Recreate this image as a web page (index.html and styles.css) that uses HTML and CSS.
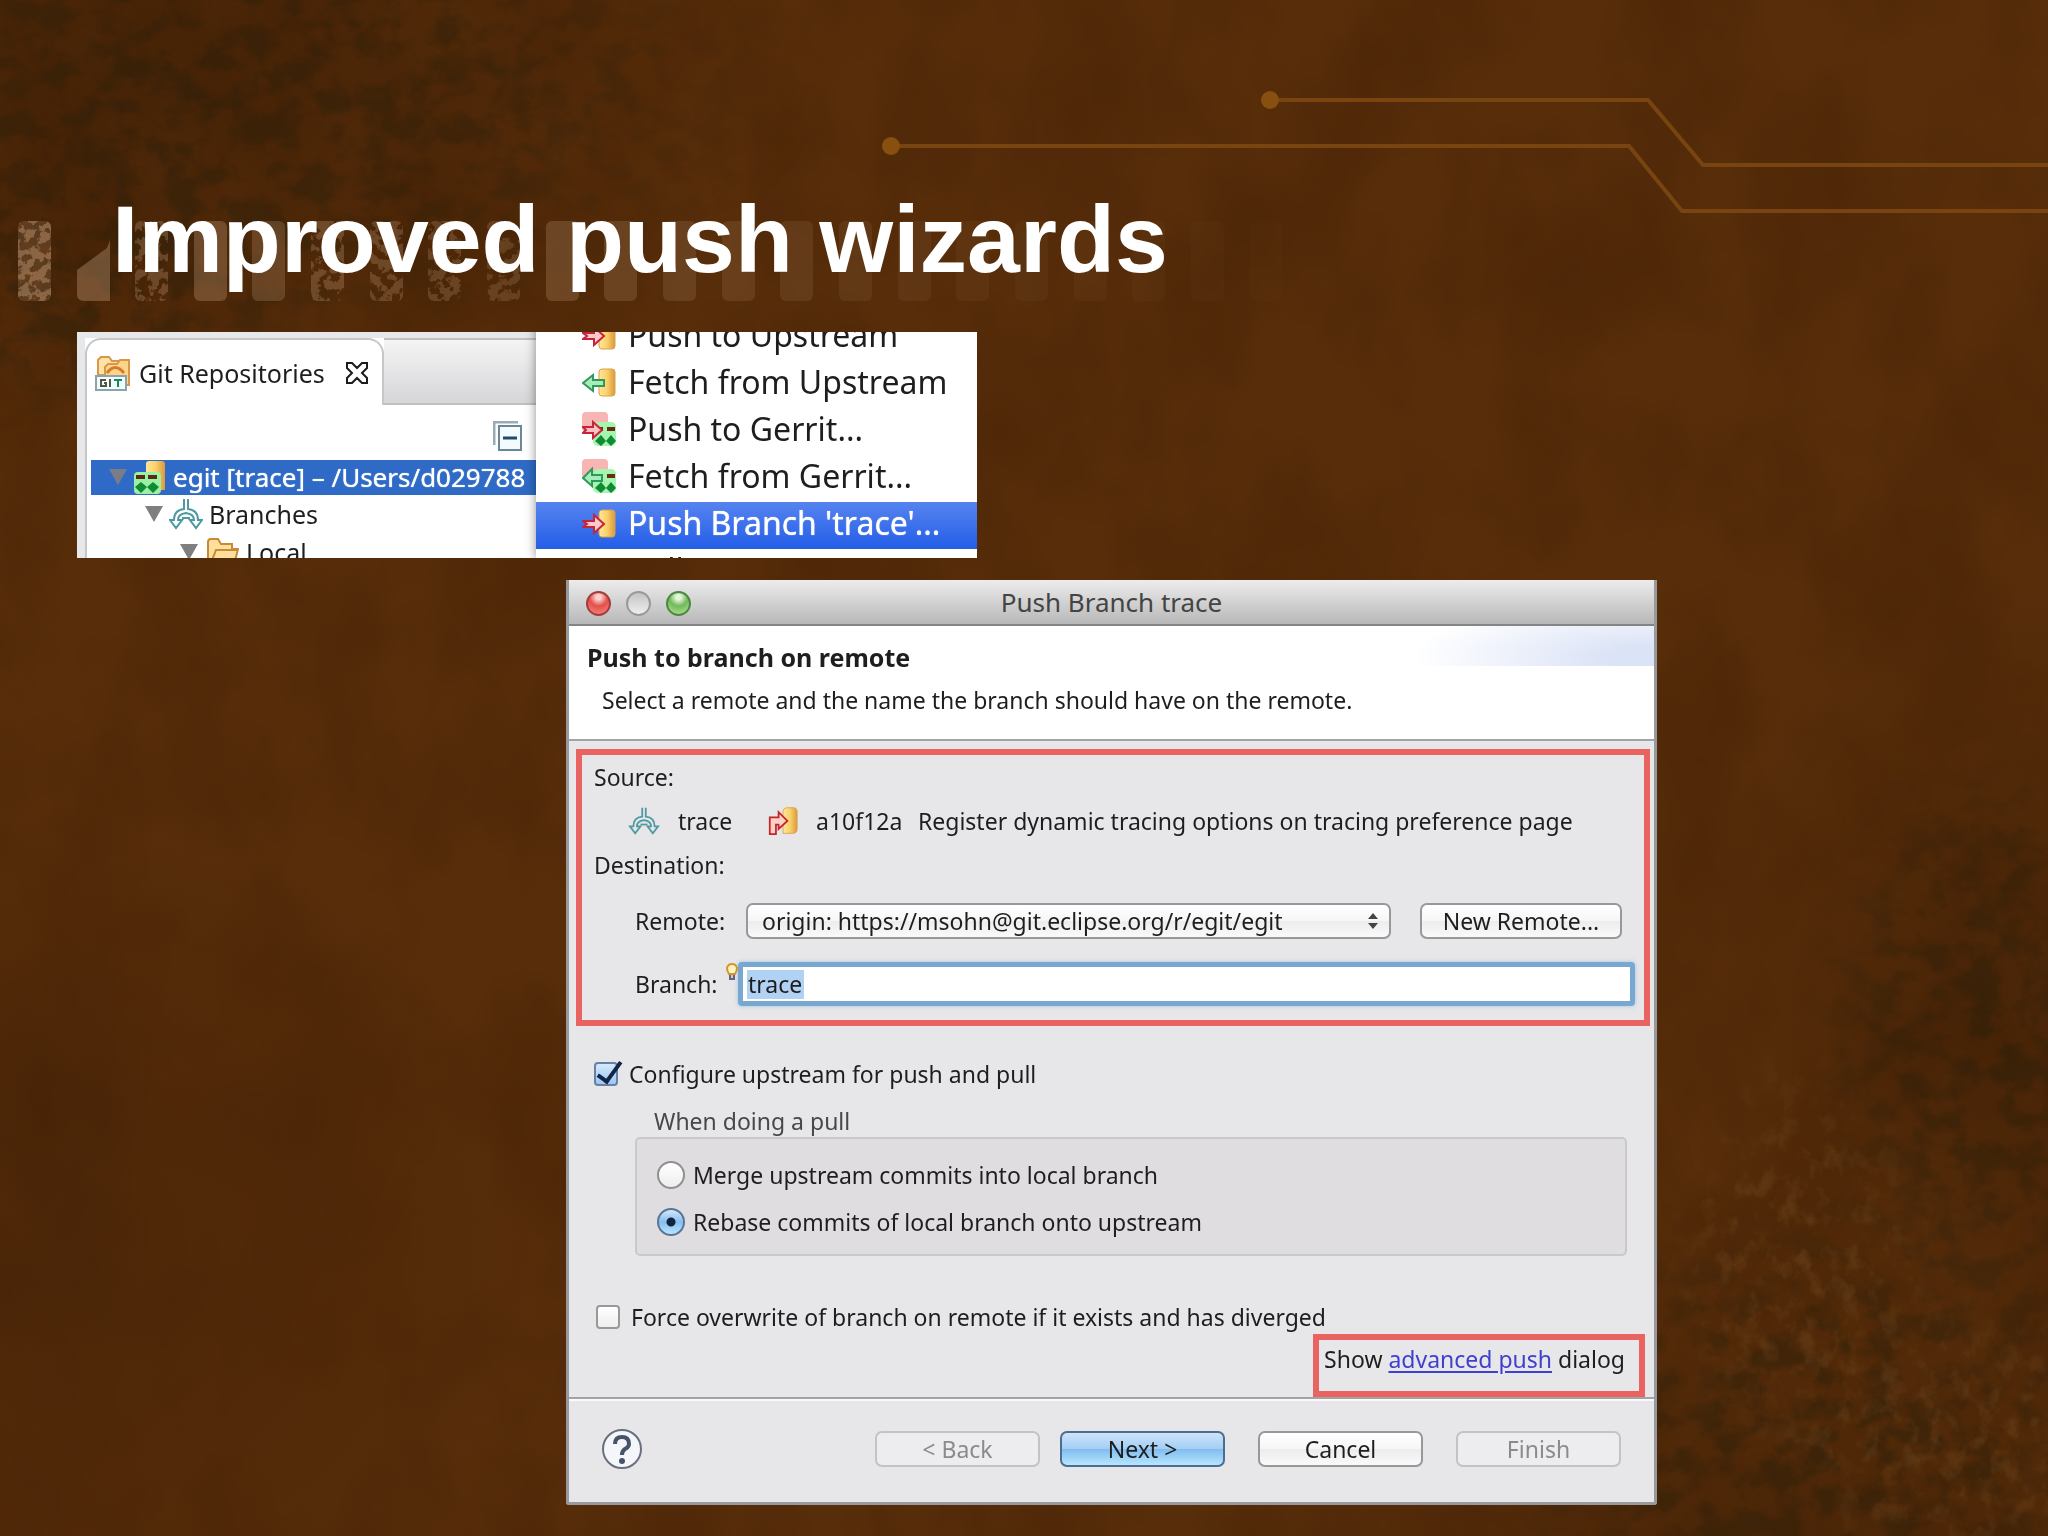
FILE: index.html
```html
<!DOCTYPE html>
<html lang="en">
<head>
<meta charset="utf-8">
<title>Improved push wizards</title>
<meta name="viewport" content="width=device-width, initial-scale=1">
<link rel="stylesheet" href="styles.css">
</head>
<body>
<svg class="backdrop" viewBox="0 0 2048 1536" preserveAspectRatio="xMidYMid slice" aria-hidden="true">
  <defs>
    <filter id="grunge" x="0" y="0" width="100%" height="100%" color-interpolation-filters="sRGB">
      <feTurbulence type="fractalNoise" baseFrequency="0.03 0.035" numOctaves="6" seed="8"/>
      <feColorMatrix values="0 0 0 0 0.16  0 0 0 0 0.12  0 0 0 0 0.04  4 0 0 0 -1.7"/>
    </filter>
    <filter id="grain" x="0" y="0" width="100%" height="100%" color-interpolation-filters="sRGB">
      <feTurbulence type="fractalNoise" baseFrequency="0.008 0.006" numOctaves="4" seed="3"/>
      <feColorMatrix values="0 0 0 0 0.22  0 0 0 0 0.1  0 0 0 0 0.01  1.6 0 0 0 -0.6"/>
    </filter>
    <filter id="dust" x="0" y="0" width="100%" height="100%" color-interpolation-filters="sRGB">
      <feTurbulence type="fractalNoise" baseFrequency="0.05 0.04" numOctaves="5" seed="21"/>
      <feColorMatrix values="0 0 0 0 0.5  0 0 0 0 0.33  0 0 0 0 0.16  4 0 0 0 -2"/>
    </filter>
    <filter id="worn" x="0" y="0" width="100%" height="100%">
      <feTurbulence type="fractalNoise" baseFrequency="0.1" numOctaves="4" seed="5" result="n"/>
      <feColorMatrix in="n" values="0 0 0 0 1  0 0 0 0 1  0 0 0 0 1  14 0 0 0 -6.4" result="m"/>
      <feComposite in="SourceGraphic" in2="m" operator="in"/>
    </filter>
    <radialGradient id="g"><stop offset="0" stop-color="#fff"/><stop offset=".5" stop-color="#fff" stop-opacity=".7"/><stop offset="1" stop-color="#fff" stop-opacity="0"/></radialGradient>
    <mask id="darkAreas">
      <ellipse cx="200" cy="90" rx="620" ry="270" fill="url(#g)"/>
      <ellipse cx="40" cy="280" rx="320" ry="150" fill="url(#g)"/>
      <ellipse cx="1990" cy="1040" rx="200" ry="330" fill="url(#g)"/>
      <ellipse cx="1830" cy="1440" rx="380" ry="260" fill="url(#g)"/>
    </mask>
    <mask id="dustAreas">
      <ellipse cx="1800" cy="1260" rx="150" ry="230" fill="url(#g)"/>
      <ellipse cx="1960" cy="1440" rx="200" ry="160" fill="url(#g)"/>
    </mask>
    <radialGradient id="shade"><stop offset="0" stop-color="#331803" stop-opacity=".75"/><stop offset="1" stop-color="#331803" stop-opacity="0"/></radialGradient>
  </defs>
  <rect width="2048" height="1536" fill="#572d0a"/>
  <ellipse cx="120" cy="80" rx="640" ry="330" fill="url(#shade)" opacity=".6"/>
  <ellipse cx="0" cy="1250" rx="560" ry="460" fill="url(#shade)" opacity=".4"/>
  <ellipse cx="2048" cy="1000" rx="360" ry="420" fill="url(#shade)" opacity=".5"/>
  <ellipse cx="1800" cy="1536" rx="520" ry="300" fill="url(#shade)" opacity=".4"/>
  <rect width="2048" height="1536" filter="url(#grain)" opacity=".35"/>
  <rect width="2048" height="1536" filter="url(#grunge)" mask="url(#darkAreas)" opacity=".5"/>
  <rect width="2048" height="1536" filter="url(#dust)" mask="url(#dustAreas)" opacity=".35"/>
  <g fill="#c09a78">
    <g filter="url(#worn)">
      <rect x="18" y="221" width="33" height="80" rx="6" opacity=".45"/>
      <rect x="135" y="221" width="33" height="80" rx="6" opacity=".3"/>
      <rect x="311" y="221" width="33" height="80" rx="6" opacity=".3"/>
      <rect x="370" y="221" width="33" height="80" rx="6" opacity=".28"/>
      <rect x="428" y="221" width="33" height="80" rx="6" opacity=".25"/>
      <rect x="487" y="221" width="33" height="80" rx="6" opacity=".22"/>
    </g>
    <rect x="18" y="221" width="33" height="80" rx="6" opacity=".2"/>
    <path d="M77 270L107 248L110 240V301H84Q77 301 77 294Z" opacity=".38"/>
    <rect x="194" y="221" width="33" height="80" rx="6" opacity=".32"/>
    <rect x="252" y="221" width="33" height="80" rx="6" opacity=".26"/>
    <rect x="546" y="221" width="33" height="80" rx="6" opacity=".26"/>
    <rect x="604" y="221" width="33" height="80" rx="6" opacity=".22"/>
    <rect x="663" y="221" width="33" height="80" rx="6" opacity=".19"/>
    <rect x="722" y="221" width="33" height="80" rx="6" opacity=".16"/>
    <rect x="780" y="221" width="33" height="80" rx="6" opacity=".14"/>
    <rect x="839" y="221" width="33" height="80" rx="6" opacity=".11"/>
    <rect x="898" y="221" width="33" height="80" rx="6" opacity=".09"/>
    <rect x="956" y="221" width="33" height="80" rx="6" opacity=".07"/>
    <rect x="1015" y="221" width="33" height="80" rx="6" opacity=".06"/>
    <rect x="1074" y="221" width="33" height="80" rx="6" opacity=".05"/>
    <rect x="1132" y="221" width="33" height="80" rx="6" opacity=".04"/>
    <rect x="1191" y="221" width="33" height="80" rx="6" opacity=".03"/>
    <rect x="1250" y="221" width="33" height="80" rx="6" opacity=".02"/>
  </g>
  <g fill="none" stroke="#78440f" stroke-width="4">
    <path d="M1270 100H1648L1703 165H2048"/>
    <path d="M891 146H1629L1682 211H2048"/>
  </g>
  <circle cx="1270" cy="100" r="9" fill="#87500f"/>
  <circle cx="891" cy="146" r="9" fill="#87500f"/>
</svg>

<svg class="symbols" aria-hidden="true">
  <defs>
    <linearGradient id="gold" x1="0" x2="1"><stop offset="0" stop-color="#ffe79a"/><stop offset=".5" stop-color="#fbd06a"/><stop offset="1" stop-color="#d99a3c"/></linearGradient>
    <symbol id="db" viewBox="0 0 34 34"><path d="M17 7Q17 4 20 4H30Q33 4 33 7V28Q33 31 30 31H20Q17 31 17 28Z" fill="url(#gold)" stroke="#d9a04a"/></symbol>
    <symbol id="push" viewBox="0 0 34 34"><use href="#db"/><path d="M1 15H12V9L22 18L12 27V21H1L5 18Z" fill="#ffc9c9" stroke="#c4243c" stroke-width="2"/></symbol>
    <symbol id="fetch" viewBox="0 0 34 34"><use href="#db"/><path d="M22 15H11V10L1 18L11 26V21H22Z" fill="#a5ecb8" stroke="#2d9a5b" stroke-width="2"/></symbol>
    <symbol id="gerrit" viewBox="0 0 34 34"><rect width="26" height="20" rx="4" fill="#f9b4b4"/><rect x="11" y="10" width="23" height="24" rx="5" fill="#a4f5ae"/><path d="M15 17H21M25 17H33" stroke="#6b2a14" stroke-width="4"/><path d="M13 29L19 23L24 29L19 34ZM24 29L29 23L34 29L29 34Z" fill="#108a35"/></symbol>
    <symbol id="pushGerrit" viewBox="0 0 34 34"><use href="#gerrit"/><path d="M1 15H11V10L20 18L11 26V21H1L4 18Z" fill="#ffc0c0" stroke="#c4243c" stroke-width="2"/></symbol>
    <symbol id="fetchGerrit" viewBox="0 0 34 34"><use href="#gerrit"/><path d="M20 16H10V10L1 19L10 27V22H20Z" fill="#a5ecb8" stroke="#2d9a5b" stroke-width="2"/></symbol>
    <symbol id="branch" viewBox="0 0 34 34"><g fill="none" stroke="#4e99a2" stroke-width="2"><path d="M15 2V12Q5 13 5 23H1L7 31L13 23H9Q9 17 17 16Q25 17 25 23H21L27 31L33 23H29Q29 13 19 12V2"/><path d="M13 21H21"/></g></symbol>
    <symbol id="folder" viewBox="0 0 34 34"><path d="M3 28V7Q3 4 6 4H13L16 9H27V14H33L29 30H5Z" fill="#ffdf9c" stroke="#c98a38" stroke-width="2"/><path d="M6 28L11 15H33" fill="none" stroke="#c98a38" stroke-width="2"/></symbol>
  </defs>
</svg>

<main class="slide">
  <h1 class="slide-title">Improved push wizards</h1>

  <section class="repo-shot" aria-label="Git Repositories context menu">
    <div class="repo-view">
      <div class="tab-bar">
        <div class="tab">
          <svg class="tab-icon" viewBox="0 0 36 36"><path d="M3 20V5L6 2H14L17 6H27V20Z" fill="#ffe2a8" stroke="#d99748" stroke-width="2"/><path d="M10 25V12L13 9H22L25 5H34V30H10Z" fill="#ffd489" stroke="#d99748" stroke-width="2"/><path d="M12 18Q20 7 29 18" fill="none" stroke="#d07e2c" stroke-width="3"/><rect x="1" y="21" width="30" height="14" fill="#f2ffff" stroke="#8aa3ad" stroke-width="2"/><g fill="none" stroke-width="2"><path d="M11 25H6V31H11V28H9M15 24V32" stroke="#554"/><path d="M19 25H27M23 25V32" stroke="#138a62"/></g></svg>
          <span>Git Repositories</span>
          <svg class="tab-close" viewBox="0 0 24 24"><path d="M2 2H7L12 7L17 2H22V7L17 12L22 17V22H17L12 17L7 22H2V17L7 12L2 7Z" fill="#fff" stroke="#1c1c1c" stroke-width="2"/></svg>
        </div>
        <div class="tab-rest"></div>
      </div>
      <div class="tree-tools">
        <svg class="collapse" viewBox="0 0 30 30"><path d="M1 24V1H25" fill="none" stroke="#9aabb5" stroke-width="3"/><rect x="6" y="5" width="22" height="24" fill="#f4fbff" stroke="#6b8797" stroke-width="2"/><path d="M10 17H24" stroke="#234a6a" stroke-width="3"/></svg>
      </div>
      <ul class="tree">
        <li class="node node-root"><svg class="twisty twisty-sel" viewBox="0 0 18 16"><path d="M0 0H18L9 16Z"/></svg><svg class="ico" viewBox="0 0 34 34"><path d="M13 4Q13 1 16 1H29Q32 1 32 4V30H13Z" fill="url(#gold)"/><rect x="1" y="12" width="27" height="22" rx="4" fill="#9bf0a4"/><path d="M3 17H12M15 17H24" stroke="#5a2a14" stroke-width="4"/><path d="M2 27L8 22L14 27L8 33ZM14 27L20 22L26 27L20 33Z" fill="#108a35"/></svg><span>egit [trace] – /Users/d029788</span></li>
        <li class="node node-branches"><svg class="twisty" viewBox="0 0 18 16"><path d="M0 0H18L9 16Z"/></svg><svg class="ico"><use href="#branch"/></svg><span>Branches</span></li>
        <li class="node node-local"><svg class="twisty" viewBox="0 0 18 16"><path d="M0 0H18L9 16Z"/></svg><svg class="ico"><use href="#folder"/></svg><span>Local</span></li>
      </ul>
    </div>
    <div class="menu">
      <button class="item"><svg><use href="#push"/></svg>Push to Upstream</button>
      <button class="item"><svg><use href="#fetch"/></svg>Fetch from Upstream</button>
      <button class="item"><svg><use href="#pushGerrit"/></svg>Push to Gerrit...</button>
      <button class="item"><svg><use href="#fetchGerrit"/></svg>Fetch from Gerrit...</button>
      <button class="item item-active"><svg><use href="#push"/></svg>Push Branch 'trace'...</button>
      <button class="item"><svg></svg>Pull</button>
    </div>
  </section>

  <section class="dialog" aria-label="Push Branch trace">
    <header class="titlebar">
      <div class="lights"><button class="light light-red" aria-label="Close"></button><button class="light light-grey" aria-label="Minimize"></button><button class="light light-green" aria-label="Zoom"></button></div>
      <span class="titlebar-text">Push Branch trace</span>
    </header>
    <div class="banner">
      <h2>Push to branch on remote</h2>
      <p>Select a remote and the name the branch should have on the remote.</p>
    </div>
    <form class="form">
      <div class="marked refs">
        <p>Source:</p>
        <div class="source">
          <svg class="src-icon"><use href="#branch"/></svg><span class="src-name">trace</span>
          <svg class="src-icon" viewBox="0 0 34 34"><path d="M17 7Q17 2 22 2H29Q33 2 33 7V26Q33 31 28 31H17Z" fill="url(#gold)" stroke="#d9a04a"/><path d="M2 32V13H12V7L22 17L12 26V21H9V32Z" fill="#ffd0c4" stroke="#c4242c" stroke-width="2"/></svg><span class="src-id">a10f12a</span><span>Register dynamic tracing options on tracing preference page</span>
        </div>
        <p>Destination:</p>
        <div class="field">
          <label class="remote-label" for="remote">Remote:</label>
          <div class="select-wrap">
            <select id="remote"><option>origin: https://msohn@git.eclipse.org/r/egit/egit</option></select>
            <svg class="arrows" viewBox="0 0 10 16"><path d="M0 6L5 0L10 6ZM0 10H10L5 16Z" fill="#444"/></svg>
          </div>
          <button type="button" class="btn btn-remote">New Remote...</button>
        </div>
        <div class="field">
          <label class="branch-label" for="branch-name">Branch:<svg class="bulb" viewBox="0 0 12 18"><path d="M3 11Q1 8 1 5Q2 1 6 1Q10 1 11 5Q11 8 9 11Z" fill="#fff3c0" stroke="#d0962e" stroke-width="2"/><path d="M4 12V16H8V12" fill="#ccd" stroke="#667" stroke-width="2"/></svg></label>
          <input id="branch-name" class="branch-input" type="text" value="trace">
        </div>
      </div>
      <label class="option upstream"><input type="checkbox" checked><span>Configure upstream for push and pull</span></label>
      <div class="pull" role="radiogroup" aria-labelledby="pull-title">
        <p id="pull-title" class="pull-title">When doing a pull</p>
        <div class="pull-box">
          <label class="option"><input type="radio" name="pull"><span>Merge upstream commits into local branch</span></label>
          <label class="option"><input type="radio" name="pull" checked><span>Rebase commits of local branch onto upstream</span></label>
        </div>
      </div>
      <label class="option force"><input type="checkbox"><span>Force overwrite of branch on remote if it exists and has diverged</span></label>
      <p class="marked advanced">Show <a href="#">advanced push</a> dialog</p>
    </form>
    <footer class="actions">
      <button class="help" aria-label="Help"><svg viewBox="0 0 40 40"><circle cx="20" cy="20" r="19" fill="#f5f6fa" stroke="#687080" stroke-width="2"/><path d="M13 15Q13 8 20 8Q27 8 27 15Q27 18 23 20Q20 22 20 26" fill="none" stroke="#46536b" stroke-width="4"/><circle cx="20" cy="32" r="3" fill="#46536b"/></svg></button>
      <button class="btn" disabled>&lt; Back</button>
      <button class="btn btn-next">Next &gt;</button>
      <button class="btn">Cancel</button>
      <button class="btn" disabled>Finish</button>
    </footer>
  </section>
</main>
</body>
</html>
```
FILE: styles.css
```css
* { box-sizing: border-box; }
body { margin: 0; background: #562c0a; color: #1e1e1e; font: 23px/30px "Noto Sans", "Open Sans", sans-serif; }
h1, h2, p, ul { margin: 0; padding: 0; }
button, input, select { font: inherit; color: inherit; margin: 0; }
svg { display: block; flex: none; }
.backdrop { position: absolute; inset: 0; width: 100%; height: 100%; z-index: -1; }
.symbols { position: absolute; width: 0; height: 0; }

.slide { position: relative; min-height: 100vh; padding: 184px 24px 31px 77px; }
.slide-title { margin-left: 35px; height: 148px; color: #fff; font: bold 95px/110px "Liberation Sans", Arial, sans-serif; }

/* Repositories view with its context menu */
.repo-shot { display: flex; max-width: 900px; height: 226px; overflow: hidden; background: #fff; }
.repo-view { flex: 1; min-width: 0; padding: 6px 0 0 8px; background: #e6e8ea; overflow: hidden; font-size: 25px; }
.tab-bar { display: flex; height: 67px; background: #fff; }
.tab { display: flex; align-items: center; width: 299px; padding: 0 13px 0 8px; border: 2px solid #c4c6c9; border-width: 2px 2px 0; border-radius: 16px 16px 0 0; white-space: nowrap; }
.tab-icon { width: 36px; height: 36px; margin-right: 8px; }
.tab-close { width: 24px; height: 24px; margin-left: auto; }
.tab-rest { flex: 1; border: 2px solid #c0c0c2; border-width: 2px 0; background: linear-gradient(#f4f4f5, #d6d6d8); }
.tree-tools { display: flex; justify-content: flex-end; height: 55px; padding: 16px 13px 0; background: #fff; border-left: 2px solid #c4c6c9; }
.collapse { width: 30px; height: 30px; }
.tree { height: 98px; padding-left: 4px; list-style: none; background: #fff; border-left: 2px solid #c4c6c9; }
.node { display: flex; align-items: center; height: 38px; white-space: nowrap; }
.node-root { height: 35px; padding: 0 0 2px 18px; gap: 6px; background: #2f6bc6; color: #fff; font-size: 26px; text-shadow: 0 0 1px #fff; }
.node-branches { padding-left: 54px; gap: 6px; }
.node-local { padding-left: 89px; gap: 7px; }
.twisty { width: 18px; height: 16px; fill: #7f7f7f; }
.twisty-sel { fill: #7c7c86; }
.ico { width: 34px; height: 34px; }
.menu { width: 441px; margin-top: -18px; background: #fff; box-shadow: 0 0 10px rgba(0, 0, 0, .45); }
.item { display: flex; align-items: center; gap: 12px; width: 100%; height: 47px; padding: 0 0 5px 46px; border: 0; background: none; font-size: 32px; line-height: 40px; text-align: left; white-space: nowrap; }
.item svg { width: 34px; height: 34px; }
.item-active { background: linear-gradient(#5683ef, #235ee8); color: #fff; text-shadow: 0 0 1px #fff; }

/* Push dialog */
.dialog { max-width: 1091px; margin: 22px 0 0 489px; border: 3px solid #98999d; border-top: 0; background: #e7e6e8; border-radius: 0 0 3px 3px; }
.titlebar { position: relative; display: flex; align-items: center; justify-content: center; height: 46px; border-bottom: 2px solid #858585; background: linear-gradient(#ececec, #b8b8b8); }
.titlebar-text { color: #444; font-size: 26px; }
.lights { position: absolute; left: 17px; top: 11px; display: flex; gap: 15px; }
.light { width: 25px; height: 25px; padding: 0; border: 2px solid #777; border-radius: 50%; }
.light-red { border-color: #a33c3c; background: radial-gradient(circle at 50% 20%, #fbd0cc 0 12%, #e2504c 45%, #fa8d84); }
.light-grey { border-color: #999; background: linear-gradient(#c4c4c4, #eee); }
.light-green { border-color: #4e8741; background: radial-gradient(circle at 50% 20%, #e4f6da 0 12%, #72b85c 45%, #b4ec98); }
.banner { display: flex; flex-direction: column; gap: 13px; height: 115px; padding: 16px 18px 0; border-bottom: 2px solid #a3a3a5; background: radial-gradient(ellipse 240px 60px at 100% 80%, #dbe3f6 20%, #fff) top right / 240px 40px no-repeat #fff; }
.banner h2 { font-size: 25px; line-height: 30px; }
.banner p { padding-left: 15px; }
.form { display: flex; flex-direction: column; align-items: flex-start; }
.marked { border: 6px solid #e96360; }
.refs { align-self: stretch; display: flex; flex-direction: column; gap: 14px; margin: 8px 4px 0 7px; padding: 7px 9px 14px 12px; }
.source { display: flex; align-items: center; padding-left: 34px; height: 30px; white-space: nowrap; }
.src-icon { width: 32px; height: 30px; }
.src-name { width: 89px; margin-left: 18px; }
.src-id { width: 102px; margin-left: 17px; }
.field { display: flex; align-items: center; padding-left: 41px; margin-top: 9px; }
.remote-label { width: 111px; }
.branch-label { position: relative; width: 103px; }
.bulb { position: absolute; left: 91px; top: -6px; width: 12px; height: 18px; }
.select-wrap { position: relative; flex: 1; margin-right: 29px; }
select, .btn { height: 36px; border: 2px solid #98989a; border-radius: 7px; background: linear-gradient(#fff, #f6f6f7 50%, #ececee 50%, #fafafa); line-height: 30px; }
select { appearance: none; display: block; width: 100%; padding: 0 40px 0 14px; }
.arrows { position: absolute; right: 13px; top: 10px; width: 10px; height: 16px; pointer-events: none; }
.btn { width: 165px; padding: 0; text-align: center; }
.btn:disabled { color: #8b8b8d; border-color: #c3c3c5; background: #ededef; }
.btn-remote { width: 202px; margin-right: 13px; }
.btn-next { border-color: #4e6b92; background: linear-gradient(#cde4f9, #a3cef3 50%, #7fbcf0 50%, #b8e6fd); }
.branch-input { flex: 1; min-width: 0; height: 44px; padding: 0 5px; border: 5px solid #78a8d0; border-radius: 4px; outline: 0; box-shadow: 0 0 4px #9cc6e6; background: linear-gradient(#b1d1f5, #b1d1f5) 4px 3px / 57px 29px no-repeat #fff; }
.option { display: flex; align-items: center; height: 30px; white-space: nowrap; }
.option input { appearance: none; flex: none; }
input[type="checkbox"] { width: 24px; height: 24px; margin-right: 11px; border: 2px solid #98989a; border-radius: 4px; background: linear-gradient(#fff, #eee); }
input[type="checkbox"]:checked { position: relative; border-color: #6880a8; background: linear-gradient(#d6e8fb, #9cc8f4); }
input[type="checkbox"]:checked::after { content: ""; position: absolute; left: 7px; top: -7px; width: 9px; height: 22px; border: solid #132544; border-width: 0 4px 4px 0; transform: rotate(36deg); }
input[type="radio"] { width: 28px; height: 28px; margin-right: 8px; border: 2px solid #909092; border-radius: 50%; background: linear-gradient(#fff, #eee); }
input[type="radio"]:checked { border-color: #5b7597; background: radial-gradient(circle, #10233c 0 4px, transparent 5px), linear-gradient(#d4e8fa, #86bdf0 50%, #b8e6ff); }
.upstream { margin: 33px 0 0 25px; }
.pull { align-self: stretch; margin: 17px 27px 0 66px; }
.pull-title { padding-left: 19px; color: #484848; }
.pull-box { display: flex; flex-direction: column; gap: 17px; margin-top: 1px; padding: 21px 20px 17px; border: 2px solid #c9c8cb; border-radius: 5px; background: #dfdde0; }
.force { margin: 46px 0 0 27px; }
.advanced { align-self: flex-end; margin: 2px 9px 0 0; padding: 4px 14px 17px 5px; }
.advanced a { color: #3f3fd0; text-underline-offset: 3px; }
.actions { display: flex; justify-content: flex-end; align-items: center; gap: 33px; height: 105px; padding: 0 33px 4px; border-top: 2px solid #a3a3a5; box-shadow: inset 0 2px #fafafa; border-radius: 0 0 3px 3px; }
.help { width: 40px; height: 40px; margin-right: auto; padding: 0; border: 0; background: none; }
.btn-next { margin-left: -13px; }
```
